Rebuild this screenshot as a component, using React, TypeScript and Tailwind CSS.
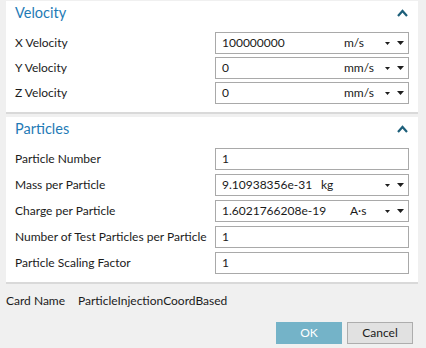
import React from "react";

const font = { fontFamily: 'Lato, "Open Sans", sans-serif' };

function Caret() {
  return (
    <svg width="11" height="8" viewBox="0 0 11 8" className="text-[#1d5f7a]">
      <path d="M1 7 L5.5 2 L10 7" fill="none" stroke="currentColor" strokeWidth="2.2" />
    </svg>
  );
}

function Tri({ small }: { small?: boolean }) {
  return small ? (
    <svg width="5" height="3" viewBox="0 0 5 3">
      <polygon points="0,0 5,0 2.5,3" fill="#1e1e1e" />
    </svg>
  ) : (
    <svg width="7" height="4" viewBox="0 0 7 4">
      <polygon points="0,0 7,0 3.5,4" fill="#1e1e1e" />
    </svg>
  );
}

function Field({ value, unit, valueW }: { value: string; unit?: string; valueW?: string }) {
  return (
    <div className="flex h-[22px] w-[194px] items-center border border-[#a9a9a9] bg-white pl-[6px] pr-[4px] text-[12px] text-[#1a1a1a]">
      {unit ? (
        <>
          <span className={`${valueW} shrink-0 whitespace-nowrap`}>{value}</span>
          <span className="flex-1">{unit}</span>
          <Tri small />
          <span className="ml-[7px]">
            <Tri />
          </span>
        </>
      ) : (
        <span>{value}</span>
      )}
    </div>
  );
}

function Row({ label, children }: { label: string; children: React.ReactNode }) {
  return (
    <div className="flex items-center">
      <span className="w-[200px] whitespace-nowrap text-[12px] text-[#1b1b1b]">{label}</span>
      {children}
    </div>
  );
}

function Section({ title, gap, children }: { title: string; gap: string; children: React.ReactNode }) {
  return (
    <div className="border-b-2 border-[#d9d9d9] bg-white pb-[8px] pl-[9px] pr-[9px]">
      <div className="flex h-[24px] items-center justify-between">
        <span className="text-[14.5px] text-[#1f7bb6]">{title}</span>
        <span className="mr-[1px]">
          <Caret />
        </span>
      </div>
      <div className={`mt-[7px] flex flex-col ${gap}`}>{children}</div>
    </div>
  );
}

export default function App() {
  return (
    <div className="h-[348px] w-[426px] overflow-hidden bg-[#f0f0f0] px-[6px] pt-[1px]" style={font}>
      <div className="w-[412px]">
        <Section title="Velocity" gap="gap-[3px]">
          <Row label="X Velocity">
            <Field value="100000000" unit="m/s" valueW="w-[122px]" />
          </Row>
          <Row label="Y Velocity">
            <Field value="0" unit="mm/s" valueW="w-[122px]" />
          </Row>
          <Row label="Z Velocity">
            <Field value="0" unit="mm/s" valueW="w-[122px]" />
          </Row>
        </Section>
        <div className="h-[3px]" />
        <Section title="Particles" gap="gap-[4px]">
          <Row label="Particle Number">
            <Field value="1" />
          </Row>
          <Row label="Mass per Particle">
            <Field value="9.10938356e-31" unit="kg" valueW="w-[99px]" />
          </Row>
          <Row label="Charge per Particle">
            <Field value="1.6021766208e-19" unit="A·s" valueW="w-[128px]" />
          </Row>
          <Row label="Number of Test Particles per Particle">
            <Field value="1" />
          </Row>
          <Row label="Particle Scaling Factor">
            <Field value="1" />
          </Row>
        </Section>
      </div>
      <div className="mt-[8px] flex h-[18px] items-center text-[12px] text-[#1b1b1b]">
        <span className="w-[72px]">Card Name</span>
        <span>ParticleInjectionCoordBased</span>
      </div>
      <div className="mt-[12px] flex justify-end gap-[5px] pr-[7px]">
        <button className="h-[22px] w-[66px] bg-[#74b3c8] text-[12px] text-white">OK</button>
        <button className="h-[22px] w-[66px] border border-[#adadad] bg-[#e1e1e1] text-[12px] text-[#1b1b1b]">
          Cancel
        </button>
      </div>
    </div>
  );
}
